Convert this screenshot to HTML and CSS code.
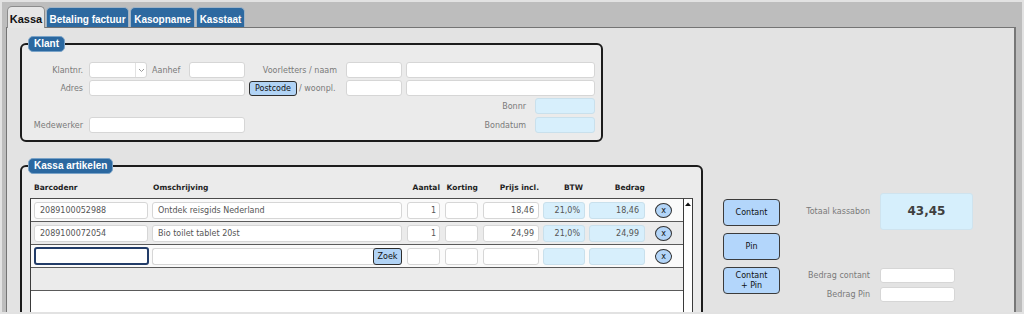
FILE: index.html
```html
<!DOCTYPE html>
<html lang="nl">
<head>
<meta charset="utf-8">
<title>Kassa</title>
<link rel="stylesheet" href="styles.css">
</head>
<body>
<div class="window">
  <div class="tabs">
    <div class="tab active t1">Kassa</div>
    <div class="tab t2">Betaling factuur</div>
    <div class="tab t3">Kasopname</div>
    <div class="tab t4">Kasstaat</div>
  </div>
  <div class="panel">
    <div class="box klant">
      <div class="legend">Klant</div>
      <div class="frow">
        <span class="lbl lcol">Klantnr.</span>
        <div class="inp select w58"><span class="sel-btn"><svg width="7" height="5" viewBox="0 0 7 5"><path d="M1 1 L3.5 3.5 L6 1" fill="none" stroke="#9a9a9a" stroke-width="1"/></svg></span></div>
        <span class="lbl aanhef">Aanhef</span>
        <div class="inp w56"></div>
        <span class="lbl lname">Voorletters / naam</span>
        <div class="inp w56"></div>
        <div class="inp w189 ml4"></div>
      </div>
      <div class="frow">
        <span class="lbl lcol">Adres</span>
        <div class="inp w156"></div>
        <button class="pbtn postcode">Postcode</button>
        <span class="lbl woonpl">/ woonpl.</span>
        <div class="inp w56"></div>
        <div class="inp w189 ml4"></div>
      </div>
      <div class="frow end">
        <span class="lbl">Bonnr</span>
        <div class="inp blue w60 ml9"></div>
      </div>
      <div class="frow r4">
        <span class="lbl lcol">Medewerker</span>
        <div class="inp w156"></div>
        <span class="lbl push">Bondatum</span>
        <div class="inp blue w60 ml9"></div>
      </div>
    </div>

    <div class="lower">
      <div class="box artikelen">
        <div class="legend">Kassa artikelen</div>
        <div class="thead">
          <span class="h c-bar">Barcodenr</span>
          <span class="h c-oms">Omschrijving</span>
          <span class="h c-aan r">Aantal</span>
          <span class="h c-kor r">Korting</span>
          <span class="h c-prs r">Prijs incl.</span>
          <span class="h c-btw r">BTW</span>
          <span class="h c-bed r">Bedrag</span>
        </div>
        <div class="table">
          <div class="rows">
            <div class="row odd">
              <div class="cell c-bar">2089100052988</div>
              <div class="cell c-oms">Ontdek reisgids Nederland</div>
              <div class="cell c-aan r">1</div>
              <div class="cell c-kor"></div>
              <div class="cell c-prs r">18,46</div>
              <div class="cell blue c-btw r">21,0%</div>
              <div class="cell blue c-bed r">18,46</div>
              <button class="xbtn">x</button>
            </div>
            <div class="row even">
              <div class="cell c-bar">2089100072054</div>
              <div class="cell c-oms">Bio toilet tablet 20st</div>
              <div class="cell c-aan r">1</div>
              <div class="cell c-kor"></div>
              <div class="cell c-prs r">24,99</div>
              <div class="cell blue c-btw r">21,0%</div>
              <div class="cell blue c-bed r">24,99</div>
              <button class="xbtn">x</button>
            </div>
            <div class="row odd">
              <div class="cell c-bar focus"></div>
              <div class="cell c-oms zoekcell"><button class="pbtn zoek">Zoek</button></div>
              <div class="cell c-aan"></div>
              <div class="cell c-kor"></div>
              <div class="cell c-prs"></div>
              <div class="cell blue c-btw"></div>
              <div class="cell blue c-bed"></div>
              <button class="xbtn">x</button>
            </div>
            <div class="row even empty"></div>
          </div>
          <div class="scroll">
            <svg class="arrow" width="8" height="6" viewBox="0 0 8 6"><path d="M1 5 L4 1.5 L7 5 Z" fill="#111"/></svg>
          </div>
        </div>
      </div>

      <div class="pay">
        <div class="btns">
          <button class="btn">Contant</button>
          <button class="btn">Pin</button>
          <button class="btn two">Contant<br>+ Pin</button>
        </div>
        <div class="info">
          <div class="totrow">
            <span class="lbl ilbl">Totaal kassabon</span>
            <div class="total">43,45</div>
          </div>
          <div class="amtrow first">
            <span class="lbl ilbl">Bedrag contant</span>
            <div class="inp w75"></div>
          </div>
          <div class="amtrow">
            <span class="lbl ilbl">Bedrag Pin</span>
            <div class="inp w75"></div>
          </div>
        </div>
      </div>
    </div>
  </div>
</div>
</body>
</html>
```

FILE: styles.css
```css
* { box-sizing: border-box; }
html, body { margin: 0; padding: 0; }
body {
  font-family: "DejaVu Sans", Verdana, sans-serif;
  font-size: 8px;
  color: #222;
  background: #e0e0e0;
}
.window {
  height: 314px;
  overflow: hidden;
  border: 2px solid #e2e2e2;
  background: #bdbdbd;
  padding: 4px 6px 0 4px;
  display: flex;
  flex-direction: column;
}

/* tabs */
.tabs {
  display: flex;
  gap: 1px;
  padding-left: 1px;
  height: 21px;
  align-items: flex-end;
}
.tab {
  height: 20px;
  padding-top: 4px;
  line-height: 15px;
  text-align: center;
  font-family: "Liberation Sans", Arial, sans-serif;
  font-weight: bold;
  font-size: 10px;
  color: #fff;
  background: #2d69a0;
  border: 1px solid #9fb3c6;
  border-bottom: none;
  border-radius: 5px 5px 0 0;
  white-space: nowrap;
}
.tab.active {
  height: 22px;
  margin-bottom: -1px;
  position: relative;
  z-index: 1;
  color: #111;
  font-size: 11px;
  background: #e6e6e6;
  border-color: #8c8c8c;
  padding-top: 5px;
}
.t1 { width: 38px; }
.t2 { width: 83px; }
.t3 { width: 65px; }
.t4 { width: 49px; }

/* panel */
.panel {
  flex: 1;
  background: #e3e3e3;
  border: 1px solid #747474;
  border-right: 2px solid #777;
  border-bottom: none;
  padding: 15px 0 0 13px;
}

.box {
  position: relative;
  border: 2px solid #1c1c1c;
  border-radius: 6px;
  background: #ebebeb;
}
.legend {
  position: absolute;
  top: -9px;
  left: 6px;
  height: 16px;
  padding: 0 5px;
  background: #2b68a0;
  color: #fff;
  font-family: "Liberation Sans", Arial, sans-serif;
  font-weight: bold;
  font-size: 10px;
  border-radius: 5px;
  border: 1px solid #7aa3c8;
  line-height: 14px;
}

/* klant */
.klant {
  width: 583px;
  height: 99px;
  padding-top: 17px;
}
.frow {
  display: flex;
  align-items: center;
  height: 16px;
  margin-bottom: 2px;
}
.frow.end { justify-content: flex-end; padding-right: 6px; }
.frow.r4 { margin-top: 3px; padding-right: 6px; }
.lbl { color: #7a7a7a; white-space: nowrap; }
.lcol { width: 61px; text-align: right; margin-right: 6px; }
.aanhef { width: 37px; margin-left: 5px; }
.lname { width: 92px; text-align: right; margin-right: 9px; }
.woonpl { width: 49px; padding-left: 2px; }
.push { margin-left: auto; }

.inp {
  height: 16px;
  background: #fff;
  border: 1px solid #d6d6d6;
  border-radius: 3px;
}
.inp.blue { background: #d7effc; border-color: #c9e0ec; }
.w56 { width: 56px; }
.w58 { width: 58px; }
.w60 { width: 60px; }
.w75 { width: 75px; }
.w156 { width: 156px; }
.w189 { width: 189px; }
.ml4 { margin-left: 4px; }
.ml9 { margin-left: 9px; }
.select { display: flex; justify-content: flex-end; }
.sel-btn {
  width: 11px;
  border-left: 1px solid #e2e2e2;
  display: flex;
  align-items: center;
  justify-content: center;
}

.pbtn {
  font-family: "DejaVu Sans", Verdana, sans-serif;
  font-size: 8px;
  color: #111;
  background: #b1d3f5;
  border: 1px solid #2e2e2e;
  border-radius: 3px;
  padding: 0;
  margin: 0;
}
.postcode {
  width: 48px;
  height: 15px;
  margin-left: 4px;
  margin-top: 1px;
}

/* lower */
.lower {
  display: flex;
  margin-top: 23px;
  align-items: flex-start;
}
.artikelen {
  width: 683px;
  height: 200px;
  padding-top: 12px;
}
.thead {
  display: flex;
  align-items: center;
  height: 16px;
  margin-bottom: 3px;
  padding-left: 12px;
}
.h {
  font-weight: bold;
  font-size: 7.5px;
  color: #1e1e1e;
  white-space: nowrap;
}
.r { text-align: right; }
.c-bar { width: 114px; margin-right: 4px; }
.c-oms { width: 250px; margin-right: 5px; }
.c-aan { width: 33px; margin-right: 5px; }
.c-kor { width: 33px; margin-right: 5px; }
.c-prs { width: 56px; margin-right: 4px; }
.c-btw { width: 42px; margin-right: 4px; }
.c-bed { width: 56px; margin-right: 10px; }
.h.c-oms { padding-left: 1px; }
.h.c-btw { padding-right: 2px; }

.table {
  display: flex;
  margin-left: 8px;
  height: 140px;
}
.rows {
  width: 653px;
  background: #fff;
  border-left: 1px solid #3a3a3a;
  border-top: 1px solid #4a4a4a;
}
.row {
  height: 23px;
  border-bottom: 1px solid #5a5a5a;
  display: flex;
  align-items: center;
  padding-left: 3px;
}
.row.odd { background: #fafafa; }
.row.even { background: #ebebeb; }
.cell {
  height: 17px;
  line-height: 15px;
  background: #fff;
  border: 1px solid #d6d6d6;
  border-radius: 3px;
  color: #555;
  padding: 0 4px 0 5px;
  white-space: nowrap;
  overflow: hidden;
}
.cell.blue { background: #d7effc; border-color: #c9e0ec; }
.cell.c-bed { padding-right: 5px; }
.cell.c-aan { padding-right: 3px; }
.cell.focus {
  width: 115px;
  margin-right: 3px;
  height: 18px;
  border: 2px solid #223c68;
}
.zoekcell {
  display: flex;
  justify-content: flex-end;
  padding: 0;
  overflow: visible;
  border-right: none;
}
.zoek {
  width: 29px;
  height: 17px;
  margin: -1px 0;
}
.xbtn {
  width: 17px;
  height: 15px;
  padding: 0;
  margin: 0;
  border: 1px solid #333;
  border-radius: 50%;
  background: #b3d5f8;
  font-family: "DejaVu Sans", Verdana, sans-serif;
  font-size: 8px;
  line-height: 13px;
  color: #111;
  display: flex;
  align-items: center;
  justify-content: center;
}
.scroll {
  width: 10px;
  background: #fff;
  border-left: 1px solid #3a3a3a;
  border-right: 1px solid #3a3a3a;
  border-top: 1px solid #4a4a4a;
  display: flex;
  justify-content: center;
  align-items: flex-start;
}
.arrow { margin-top: 2px; }

/* pay */
.pay {
  display: flex;
  margin-left: 20px;
  margin-top: 28px;
}
.btns {
  display: flex;
  flex-direction: column;
  gap: 7px;
  padding-top: 6px;
  width: 57px;
}
.btn {
  height: 27px;
  width: 57px;
  padding: 0;
  margin: 0;
  background: #b3d6fb;
  border: 1px solid #3b3b3b;
  border-radius: 4px;
  font-family: "DejaVu Sans", Verdana, sans-serif;
  font-size: 8px;
  color: #111;
}
.btn.two { line-height: 10px; }
.info {
  display: flex;
  flex-direction: column;
  margin-left: 10px;
}
.totrow {
  display: flex;
  align-items: center;
  height: 37px;
}
.ilbl {
  width: 80px;
  text-align: right;
  margin-right: 10px;
}
.total {
  width: 93px;
  height: 37px;
  line-height: 35px;
  text-align: center;
  background: #d6effc;
  border: 1px solid #cfe3ee;
  border-radius: 3px;
  font-weight: bold;
  font-size: 12px;
  color: #3f3f3f;
}
.amtrow {
  display: flex;
  align-items: center;
  height: 15px;
  margin-top: 4px;
}
.amtrow.first { margin-top: 38px; }
.amtrow .inp { height: 15px; }
```
